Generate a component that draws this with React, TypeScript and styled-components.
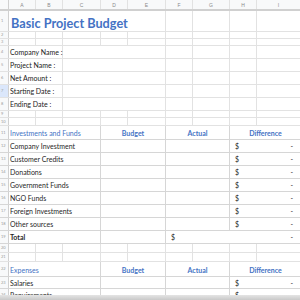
import React from 'react';
import styled, {createGlobalStyle} from 'styled-components';

const GlobalStyle = createGlobalStyle`
  html, body {
    margin: 0;
    padding: 0;
    background: #ffffff;
    overflow: hidden;
  }
  * {
    box-sizing: border-box;
  }
`;

const COLS = '9px 27px 27px 38px 27px 38px 27px 37px 27px 44px';
const GRID = '#e2e2e2';
const TABLE = '#d6d6d6';
const BLUE = '#4472c4';

const Sheet = styled.div`
  display: flex;
  flex-direction: column;
  width: 300px;
  height: 300px;
  overflow: hidden;
  font-family: Lato, 'Open Sans', sans-serif;
  color: #1f1f1f;
`;

const Row = styled.div<{$h: number; $line?: string}>`
  display: grid;
  grid-template-columns: ${COLS};
  flex: 0 0 ${p => p.$h}px;
  height: ${p => p.$h}px;
  border-bottom: 1px solid ${p => p.$line || GRID};
`;

const HeaderRow = styled(Row)`
  border-bottom: 2px solid #d0d0d0;
`;

const RowNum = styled.div<{$active?: boolean}>`
  border-right: 1px solid #d0d0d0;
  background: ${p => (p.$active ? '#dbe7fb' : '#f8f9fa')};
  color: #9a9a9a;
  font-size: 4px;
  line-height: 1;
  display: flex;
  align-items: center;
  justify-content: flex-start;
  padding-left: 1px;
`;

const ColHead = styled.div`
  border-right: 1px solid ${GRID};
  background: #f8f9fa;
  color: #8a8a8a;
  font-family: 'Liberation Sans', Arial, sans-serif;
  font-size: 5px;
  display: flex;
  align-items: center;
  justify-content: center;
`;

const Cell = styled.div<{
  $span?: number;
  $line?: string | false;
  $align?: 'left' | 'center';
}>`
  grid-column: span ${p => p.$span || 1};
  border-right: ${p => (p.$line === false ? 'none' : `1px solid ${p.$line || GRID}`)};
  display: flex;
  align-items: center;
  justify-content: ${p => (p.$align === 'center' ? 'center' : 'flex-start')};
  padding: 0 1px;
  font-size: 7px;
  white-space: nowrap;
  min-width: 0;
`;

const Title = styled(Cell)`
  font-size: 12.7px;
  font-weight: 700;
  color: ${BLUE};
  padding: 3px 0 0 2px;
`;

const Label = styled(Cell)`
  color: #222;
`;

const Heading = styled(Cell)<{$bold?: boolean}>`
  color: ${BLUE};
  font-weight: ${p => (p.$bold ? 700 : 400)};
  padding-top: 1px;
`;

const Money = styled(Cell)`
  justify-content: space-between;
  padding: 0 8px 0 5px;
`;

const Total = styled(Cell)`
  font-weight: 700;
`;

const ScrollEdge = styled.div`
  position: fixed;
  left: 0;
  right: 0;
  bottom: 0;
  height: 5px;
  background: linear-gradient(#e4e4e4, #c9c9c9);
`;

const letters = ['A', 'B', 'C', 'D', 'E', 'F', 'G', 'H', 'I'];

const EmptyRow = ({n, h}: {n: number; h: number}) => (
  <Row $h={h}>
    <RowNum>{n}</RowNum>
    {letters.map(l => (
      <Cell key={l} />
    ))}
  </Row>
);

const InfoRow = ({n, label, active}: {n: number; label: string; active?: boolean}) => (
  <Row $h={13}>
    <RowNum $active={active}>{n}</RowNum>
    <Label $span={2}>{label}</Label>
    <Cell $span={3} />
    <Cell />
    <Cell />
    <Cell />
    <Cell />
  </Row>
);

const SectionHead = ({n, h, title}: {n: number; h: number; title: string}) => (
  <Row $h={h} $line={TABLE}>
    <RowNum>{n}</RowNum>
    <Heading $span={3} $line={TABLE}>{title}</Heading>
    <Heading $span={2} $line={TABLE} $align='center' $bold>
      Budget
    </Heading>
    <Heading $span={2} $line={TABLE} $align='center' $bold>
      Actual
    </Heading>
    <Heading $span={2} $line={false} $align='center' $bold>
      Difference
    </Heading>
  </Row>
);

const ItemRow = ({n, h = 13, label}: {n: number; h?: number; label: string}) => (
  <Row $h={h} $line={TABLE}>
    <RowNum>{n}</RowNum>
    <Cell $span={3} $line={TABLE}>{label}</Cell>
    <Cell $span={2} $line={TABLE} />
    <Cell $span={2} $line={TABLE} />
    <Money $span={2} $line={false}>
      <span>$</span>
      <span>-</span>
    </Money>
  </Row>
);

const investments = [
  'Company Investment',
  'Customer Credits',
  'Donations',
  'Government Funds',
  'NGO Funds',
  'Foreign Investments',
  'Other sources',
];

const App = () => (
  <>
    <GlobalStyle />
    <Sheet>
      <HeaderRow $h={11}>
        <RowNum />
        {letters.map(l => (
          <ColHead key={l}>{l}</ColHead>
        ))}
      </HeaderRow>
      <Row $h={21}>
        <RowNum>1</RowNum>
        <Title $span={5}>Basic Project Budget</Title>
        <Cell />
        <Cell />
        <Cell />
        <Cell />
      </Row>
      <EmptyRow n={2} h={7} />
      <EmptyRow n={3} h={7} />
      <InfoRow n={4} label='Company Name :' />
      <InfoRow n={5} label='Project Name :' />
      <InfoRow n={6} label='Net Amount :' />
      <InfoRow n={7} label='Starting Date :' active />
      <InfoRow n={8} label='Ending Date :' />
      <EmptyRow n={9} h={7} />
      <EmptyRow n={10} h={8} />
      <SectionHead n={11} h={14} title='Investments and Funds' />
      {investments.map((item, i) => (
        <ItemRow key={item} n={12 + i} label={item} />
      ))}
      <Row $h={13} $line={TABLE}>
        <RowNum>19</RowNum>
        <Total $span={3} $line={TABLE}>Total</Total>
        <Cell $span={2} $line={TABLE} />
        <Money $span={4} $line={false}>
          <span>$</span>
          <span>-</span>
        </Money>
      </Row>
      <EmptyRow n={20} h={9} />
      <EmptyRow n={21} h={9} />
      <SectionHead n={22} h={15} title='Expenses' />
      <ItemRow n={23} h={12} label='Salaries' />
      <ItemRow n={24} label='Requirements' />
    </Sheet>
    <ScrollEdge />
  </>
);

export default App;
